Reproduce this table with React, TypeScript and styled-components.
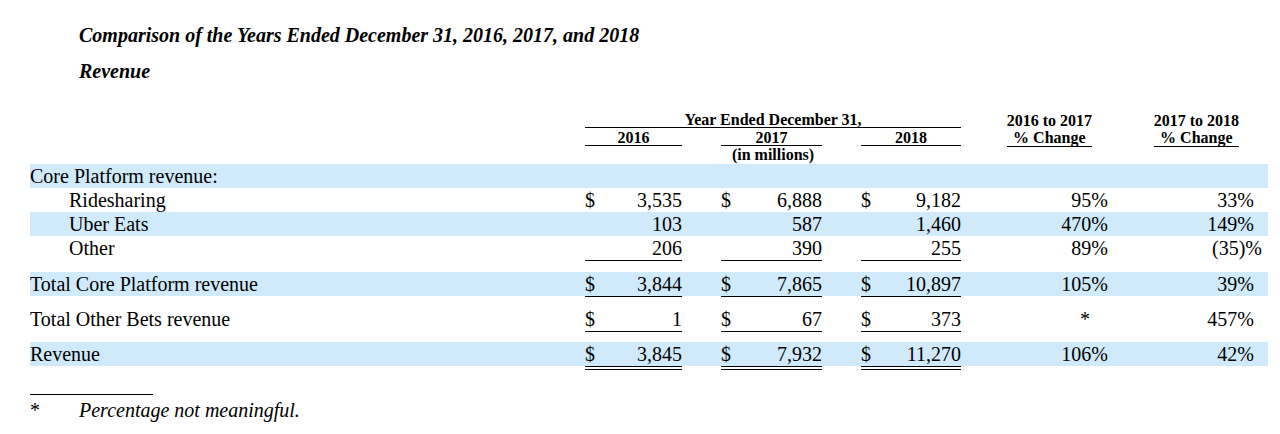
import React, { FC } from 'react';
import styled, { createGlobalStyle } from 'styled-components';

const GlobalStyle = createGlobalStyle`
  html, body {
    margin: 0;
    padding: 0;
    background: #fff;
  }
  body {
    font-family: 'Liberation Serif', 'Times New Roman', serif;
    color: #000;
  }
`;

const COLUMNS = '555px 97px 140px 139px 147px 146px 14px';
const TABLE_WIDTH = 1238;
const BAND = '#d0eafb';

const Page = styled.div`
  width: 1280px;
  height: 434px;
  box-sizing: border-box;
  padding: 23px 0 0 30px;
  overflow: hidden;
`;

const Heading = styled.div<{ $top?: number }>`
  margin: ${(p) => p.$top || 0}px 0 0 49px;
  font-size: 20px;
  line-height: 24px;
  font-weight: bold;
  font-style: italic;
`;

const HeaderGrid = styled.div`
  display: grid;
  grid-template-columns: ${COLUMNS};
  grid-template-rows: 17px 18px 18px;
  width: ${TABLE_WIDTH}px;
  margin-top: 28px;
  font-size: 16px;
  font-weight: bold;
`;

const YearSpan = styled.div`
  grid-column: 2 / 5;
  grid-row: 1;
  text-align: center;
  line-height: 17px;
  border-bottom: 1px solid #000;
`;

const YearCell = styled.div<{ $col: number; $w: number }>`
  grid-column: ${(p) => p.$col};
  grid-row: 2;
  justify-self: end;
  width: ${(p) => p.$w}px;
  margin-top: 1px;
  text-align: center;
  line-height: 17px;
  border-bottom: 1px solid #000;
`;

const Units = styled.div`
  grid-column: 2 / 5;
  grid-row: 3;
  text-align: center;
  line-height: 18px;
`;

const ChangeHead = styled.div<{ $col: number; $mr: number }>`
  grid-column: ${(p) => p.$col};
  grid-row: 1 / 3;
  justify-self: end;
  margin-right: ${(p) => p.$mr}px;
  text-align: center;
  line-height: 17px;
  padding-top: 1px;
`;

const ChangeLine = styled.div`
  border-bottom: 1px solid #000;
`;

const Row = styled.div<{ $shade?: boolean; $gap?: number }>`
  display: grid;
  grid-template-columns: ${COLUMNS};
  align-items: center;
  width: ${TABLE_WIDTH}px;
  height: 24px;
  margin-top: ${(p) => p.$gap || 0}px;
  background: ${(p) => (p.$shade ? BAND : 'transparent')};
  font-size: 20px;
  line-height: 24px;
`;

const Label = styled.div<{ $indent?: boolean }>`
  padding-left: ${(p) => (p.$indent ? 39 : 0)}px;
  white-space: nowrap;
`;

type Rule = 'single' | 'double' | undefined;

const ruleShadow = (rule: Rule) => {
  if (rule === 'single') return '0 1px 0 #000';
  if (rule === 'double') return '0 1px 0 #000, 0 3px 0 #fff, 0 4px 0 #000';
  return 'none';
};

const Amount = styled.div<{ $w: number; $rule?: Rule }>`
  justify-self: end;
  width: ${(p) => p.$w}px;
  height: 24px;
  display: flex;
  justify-content: space-between;
  box-shadow: ${(p) => ruleShadow(p.$rule)};
`;

const Pct = styled.div<{ $hang?: boolean; $mr?: number }>`
  justify-self: end;
  margin-right: ${(p) => (p.$hang ? -8 : p.$mr || 0)}px;
  white-space: nowrap;
`;

const FootRule = styled.div`
  width: 123px;
  height: 1px;
  background: #000;
  margin-top: 28px;
`;

const Footnote = styled.div`
  display: flex;
  margin-top: 3px;
  font-size: 20px;
  line-height: 24px;
`;

const Star = styled.span`
  width: 49px;
`;

const Note = styled.span`
  font-style: italic;
`;

const WIDTHS = [97, 101, 100];

interface LineItem {
  label: string;
  indent?: boolean;
  shade?: boolean;
  gap?: number;
  dollar?: boolean;
  values?: string[];
  rule?: Rule;
  changes?: string[];
}

const items: LineItem[] = [
  { label: 'Core Platform revenue:', shade: true },
  {
    label: 'Ridesharing',
    indent: true,
    dollar: true,
    values: ['3,535', '6,888', '9,182'],
    changes: ['95%', '33%'],
  },
  {
    label: 'Uber Eats',
    indent: true,
    shade: true,
    values: ['103', '587', '1,460'],
    changes: ['470%', '149%'],
  },
  {
    label: 'Other',
    indent: true,
    values: ['206', '390', '255'],
    rule: 'single',
    changes: ['89%', '(35)%'],
  },
  {
    label: 'Total Core Platform revenue',
    shade: true,
    gap: 12,
    dollar: true,
    values: ['3,844', '7,865', '10,897'],
    rule: 'single',
    changes: ['105%', '39%'],
  },
  {
    label: 'Total Other Bets revenue',
    gap: 11,
    dollar: true,
    values: ['1', '67', '373'],
    rule: 'single',
    changes: ['*', '457%'],
  },
  {
    label: 'Revenue',
    shade: true,
    gap: 11,
    dollar: true,
    values: ['3,845', '7,932', '11,270'],
    rule: 'double',
    changes: ['106%', '42%'],
  },
];

const TableRow: FC<{ item: LineItem }> = ({ item }) => (
  <Row $shade={item.shade} $gap={item.gap}>
    <Label $indent={item.indent}>{item.label}</Label>
    {item.values ? (
      item.values.map((v, i) => (
        <Amount key={i} $w={WIDTHS[i]} $rule={item.rule}>
          <span>{item.dollar ? '$' : ''}</span>
          <span>{v}</span>
        </Amount>
      ))
    ) : (
      <>
        <span />
        <span />
        <span />
      </>
    )}
    {item.changes
      ? item.changes.map((c, i) => (
          <Pct key={i} $hang={c.startsWith('(')} $mr={c === '*' ? 18 : 0}>
            {c}
          </Pct>
        ))
      : null}
  </Row>
);

const App: FC = () => (
  <>
    <GlobalStyle />
    <Page>
      <Heading>Comparison of the Years Ended December 31, 2016, 2017, and 2018</Heading>
      <Heading $top={12}>Revenue</Heading>

      <HeaderGrid>
        <YearSpan>Year Ended December 31,</YearSpan>
        <YearCell $col={2} $w={97}>2016</YearCell>
        <YearCell $col={3} $w={101}>2017</YearCell>
        <YearCell $col={4} $w={100}>2018</YearCell>
        <Units>(in millions)</Units>
        <ChangeHead $col={5} $mr={16}>
          2016 to 2017
          <ChangeLine>% Change</ChangeLine>
        </ChangeHead>
        <ChangeHead $col={6} $mr={15}>
          2017 to 2018
          <ChangeLine>% Change</ChangeLine>
        </ChangeHead>
      </HeaderGrid>

      {items.map((item) => (
        <TableRow key={item.label} item={item} />
      ))}

      <FootRule />
      <Footnote>
        <Star>*</Star>
        <Note>Percentage not meaningful.</Note>
      </Footnote>
    </Page>
  </>
);

export default App;
